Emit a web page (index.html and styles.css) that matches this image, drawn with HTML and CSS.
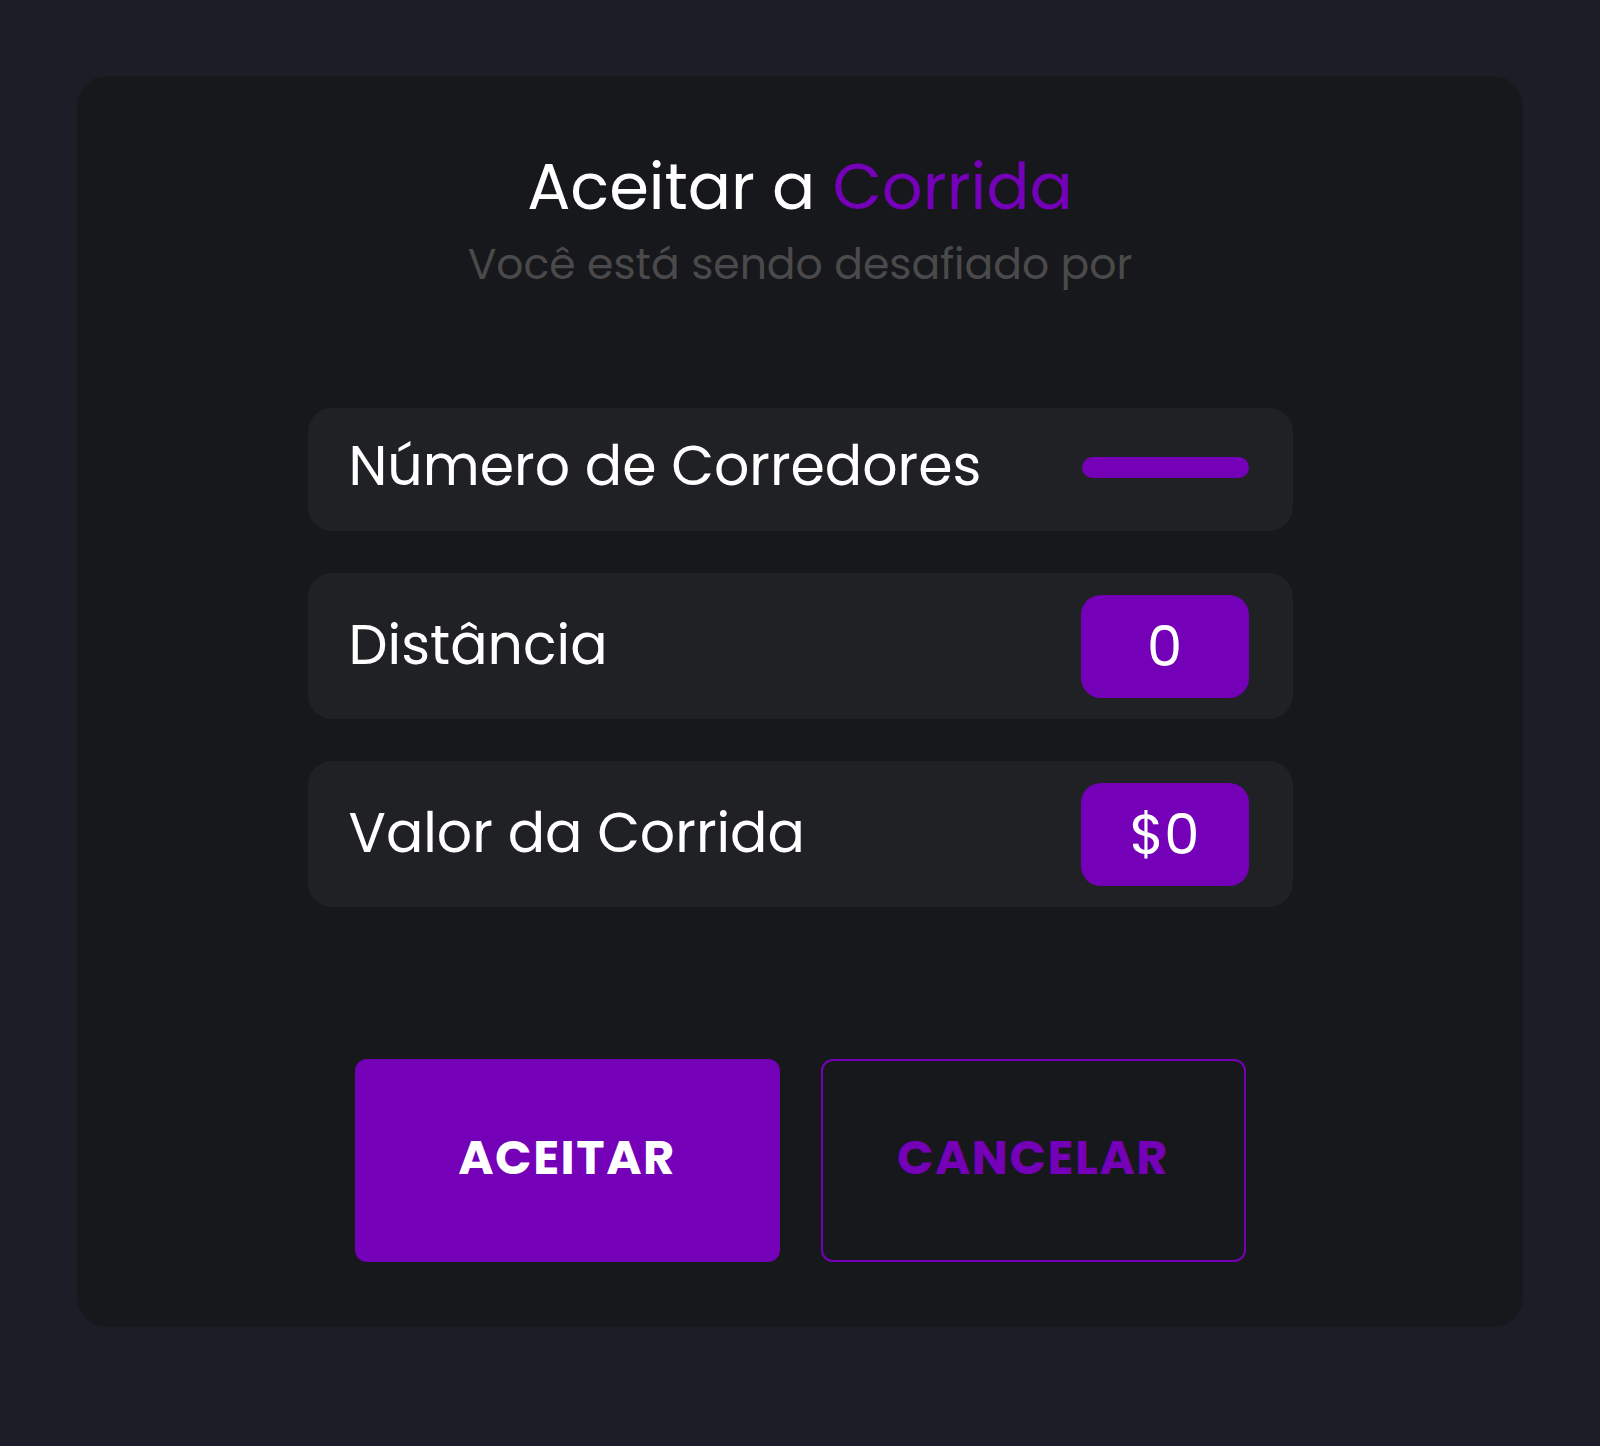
FILE: index.html
```html
<!DOCTYPE html>
<html lang="pt-BR">
<head>
<meta charset="utf-8">
<title>Aceitar a Corrida</title>
<link rel="stylesheet" href="styles.css">
</head>
<body>
  <main class="card">
    <h1 class="title">Aceitar a <span class="accent">Corrida</span></h1>
    <p class="subtitle">Você está sendo desafiado por</p>

    <section class="rows">
      <div class="row row-short">
        <span class="label">Número de Corredores</span>
        <span class="bar"></span>
      </div>
      <div class="row">
        <span class="label">Distância</span>
        <span class="badge">0</span>
      </div>
      <div class="row">
        <span class="label">Valor da Corrida</span>
        <span class="badge">$0</span>
      </div>
    </section>

    <div class="actions">
      <button class="btn btn-primary" type="button">ACEITAR</button>
      <button class="btn btn-outline" type="button">CANCELAR</button>
    </div>
  </main>
</body>
</html>
```

FILE: styles.css
```css
* {
  box-sizing: border-box;
}

html, body {
  margin: 0;
  padding: 0;
}

body {
  background: #1b1e26;
  padding: 76px 77px 119px;
  font-family: Poppins, Inter, "Open Sans", sans-serif;
  color: #ffffff;
}

.card {
  background: #17181b;
  border-radius: 30px;
  padding: 71px 0 65px;
  display: flex;
  flex-direction: column;
  align-items: center;
}

.title {
  margin: 0;
  font-size: 64px;
  line-height: 80px;
  font-weight: 400;
  letter-spacing: 0;
  color: #ffffff;
}

.accent {
  color: #7400b8;
}

.subtitle {
  margin: 12px 0 0;
  font-size: 42.5px;
  line-height: 51px;
  font-weight: 400;
  color: #4a4a4b;
}

.rows {
  margin-top: 118px;
  width: 985px;
  display: flex;
  flex-direction: column;
  gap: 42px;
}

.row {
  height: 146px;
  background: #202124;
  border-radius: 24px;
  padding: 0 44px 0 41px;
  display: flex;
  align-items: center;
  justify-content: space-between;
}

.row-short {
  height: 123px;
  padding-bottom: 4px;
}

.label {
  font-size: 55.3px;
  line-height: 77px;
  padding-bottom: 4px;
  font-weight: 400;
  color: #ffffff;
}

.bar {
  width: 167px;
  height: 21px;
  border-radius: 11px;
  background: #7400b8;
}

.badge {
  width: 168px;
  height: 103px;
  border-radius: 20px;
  background: #7400b8;
  color: #ffffff;
  font-size: 56px;
  line-height: 103px;
  text-align: center;
}

.actions {
  margin-top: 152px;
  display: flex;
  gap: 41px;
}

.btn {
  width: 425px;
  height: 203px;
  border-radius: 12px;
  padding: 0 0 6px;
  font-family: Poppins, Inter, "Open Sans", sans-serif;
  font-size: 48px;
  font-weight: 700;
  letter-spacing: 1.5px;
  cursor: pointer;
}

.btn-primary {
  background: #7400b8;
  border: 2px solid #7400b8;
  color: #ffffff;
}

.btn-outline {
  background: transparent;
  border: 2px solid #7400b8;
  color: #7400b8;
}
```
